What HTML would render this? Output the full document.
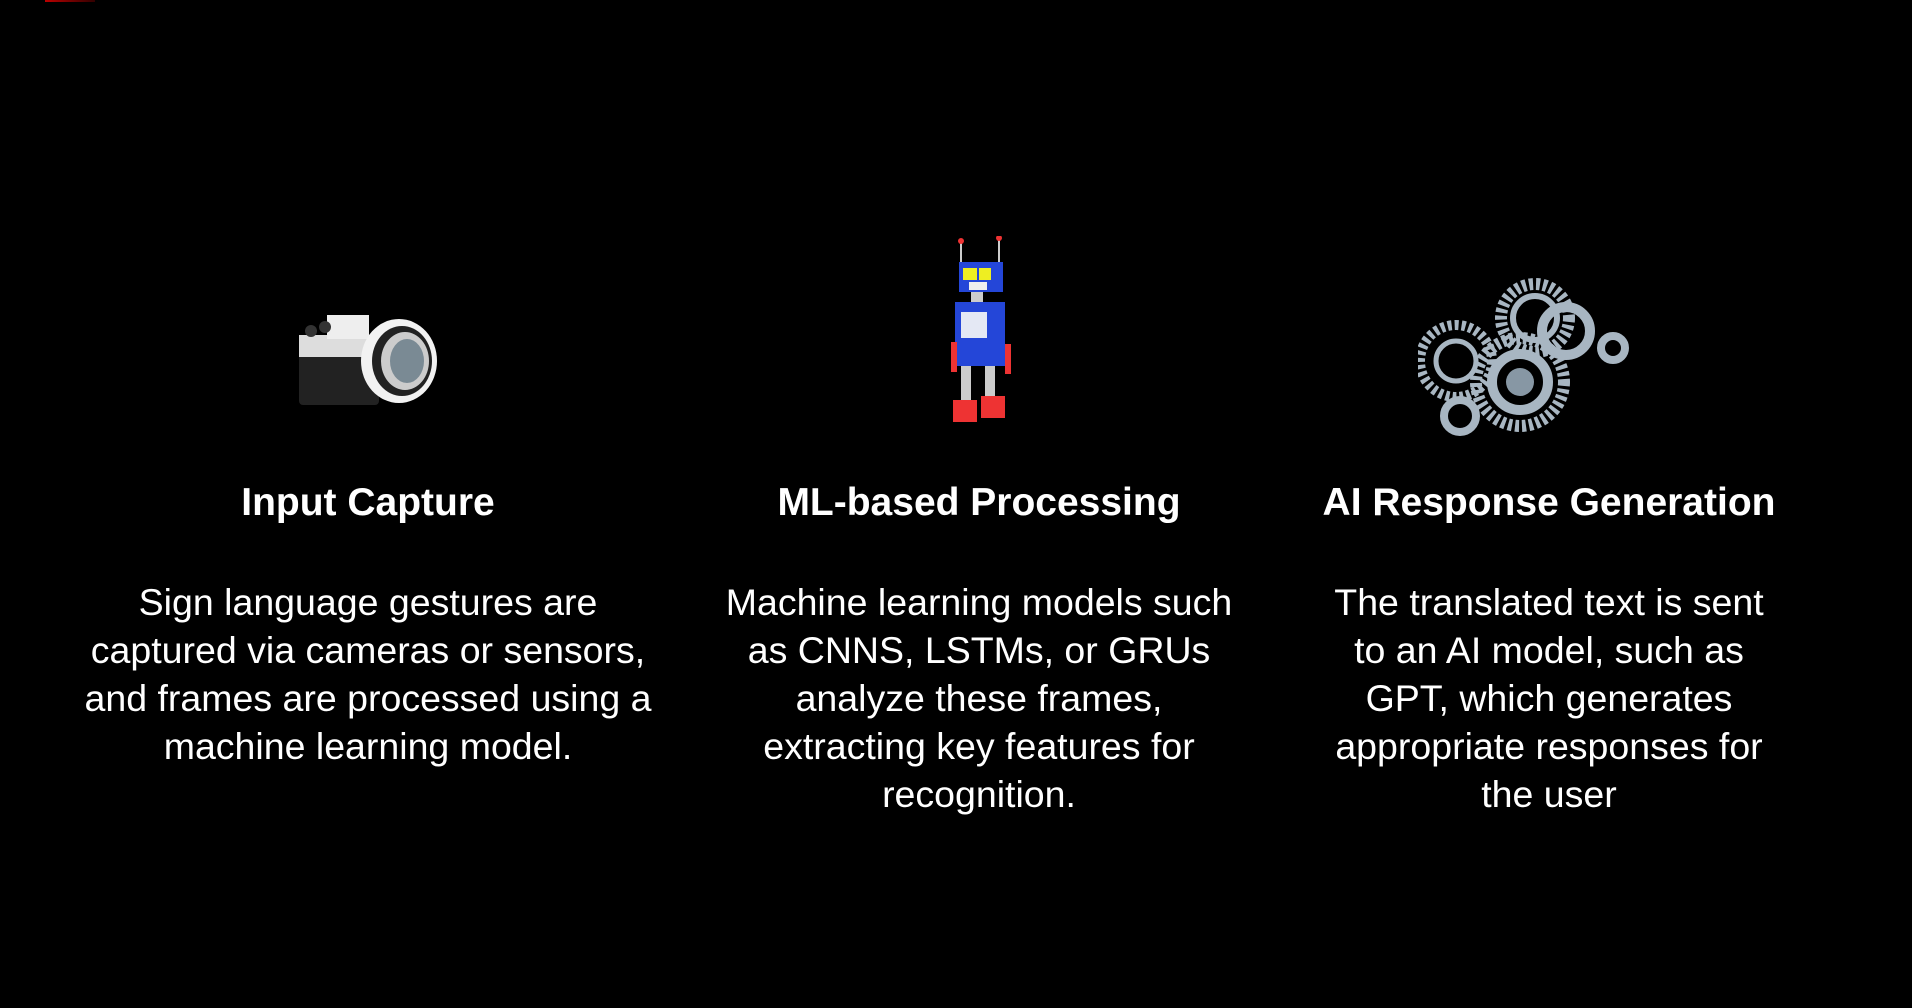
<!DOCTYPE html>
<html><head><meta charset="utf-8"><style>
body{margin:0;width:1912px;height:1008px;background:#000;overflow:hidden;position:relative;font-family:"Liberation Sans",sans-serif;color:#fff}
.t{position:absolute;width:700px;text-align:center;font-weight:bold;font-size:39px;top:481px}
.b{position:absolute;width:700px;text-align:center;font-size:37.5px;line-height:48px;top:578px}
</style></head><body>
<div style="position:absolute;left:45px;top:0;width:50px;height:2px;background:linear-gradient(90deg,#b00,#300)"></div>

<svg style="position:absolute;left:299px;top:305px" width="142" height="104" viewBox="0 0 142 104">
<rect x="0" y="42" width="80" height="58" rx="4" fill="#222"/>
<rect x="0" y="30" width="80" height="22" fill="#ddd"/>
<rect x="28" y="10" width="42" height="24" fill="#eee"/>
<circle cx="12" cy="26" r="6" fill="#333"/><circle cx="26" cy="22" r="6" fill="#333"/>
<ellipse cx="100" cy="56" rx="38" ry="42" fill="#f2f2f2"/>
<ellipse cx="103" cy="56" rx="30" ry="35" fill="#222"/>
<ellipse cx="106" cy="56" rx="24" ry="29" fill="#ccc"/>
<ellipse cx="108" cy="56" rx="17" ry="22" fill="#7a8a94"/>
</svg>

<svg style="position:absolute;left:925px;top:236px" width="92" height="190" viewBox="0 0 92 190">
<line x1="36" y1="6" x2="36" y2="26" stroke="#ccc" stroke-width="2"/><line x1="74" y1="2" x2="74" y2="26" stroke="#ccc" stroke-width="2"/>
<circle cx="36" cy="5" r="3" fill="#e33"/><circle cx="74" cy="2" r="3" fill="#e33"/>
<rect x="34" y="26" width="44" height="30" fill="#2446d8"/>
<rect x="38" y="32" width="14" height="12" fill="#ee2"/><rect x="54" y="32" width="12" height="12" fill="#ee2"/>
<rect x="44" y="46" width="18" height="8" fill="#eee"/>
<rect x="46" y="56" width="12" height="10" fill="#ccc"/>
<rect x="30" y="66" width="50" height="64" fill="#2446d8"/>
<rect x="36" y="76" width="26" height="26" fill="#e4e8f4"/>
<rect x="36" y="130" width="10" height="46" fill="#ccc"/><rect x="60" y="130" width="10" height="42" fill="#ccc"/>
<rect x="26" y="106" width="6" height="30" fill="#e33"/><rect x="80" y="108" width="6" height="30" fill="#e33"/>
<rect x="28" y="164" width="24" height="22" fill="#e33"/><rect x="56" y="160" width="24" height="22" fill="#e33"/>
</svg>

<svg style="position:absolute;left:1418px;top:276px" width="212" height="164" viewBox="0 0 212 164">
<g fill="none" stroke="#a8b6c2">
<circle cx="117" cy="42" r="34" stroke-width="12" stroke-dasharray="4 3"/>
<circle cx="117" cy="42" r="22" stroke-width="6"/>
<circle cx="148" cy="55" r="24" stroke-width="10"/>
<circle cx="195" cy="72" r="12" stroke-width="8"/>
<circle cx="38" cy="85" r="36" stroke-width="10" stroke-dasharray="4 3"/>
<circle cx="38" cy="85" r="20" stroke-width="5"/>
<circle cx="102" cy="106" r="44" stroke-width="12" stroke-dasharray="4 3"/>
<circle cx="102" cy="106" r="28" stroke-width="10"/>
<circle cx="42" cy="140" r="16" stroke-width="8"/>
</g><circle cx="102" cy="106" r="14" fill="#8797a4"/>
</svg>

<div class="t" style="left:18px">Input Capture</div>
<div class="t" style="left:629px">ML-based Processing</div>
<div class="t" style="left:1199px">AI Response Generation</div>

<div class="b" style="left:18px">Sign language gestures are<br>captured via cameras or sensors,<br>and frames are processed using a<br>machine learning model.</div>
<div class="b" style="left:629px">Machine learning models such<br>as CNNS, LSTMs, or GRUs<br>analyze these frames,<br>extracting key features for<br>recognition.</div>
<div class="b" style="left:1199px">The translated text is sent<br>to an AI model, such as<br>GPT, which generates<br>appropriate responses for<br>the user</div>
</body></html>
